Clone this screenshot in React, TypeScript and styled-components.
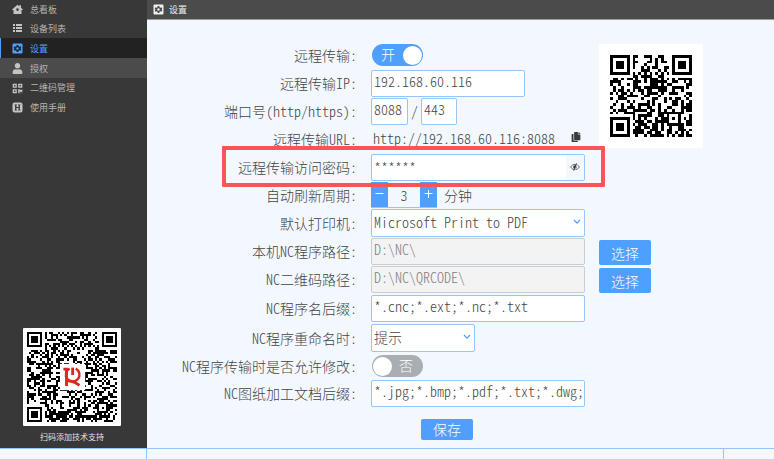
import React, { useMemo, useState } from "react";
import styled, { createGlobalStyle, css } from "styled-components";
import { FaCopy, FaQrcode, FaUser } from "react-icons/fa";

/* ---------- QR encoding (byte mode, equal-length blocks) ---------- */

type QrSpec = {
  version: number;
  blocks: number;
  dataPerBlock: number;
  ecPerBlock: number;
  levelBits: number;
  align: number;
};

const V3Q: QrSpec = { version: 3, blocks: 2, dataPerBlock: 17, ecPerBlock: 18, levelBits: 3, align: 22 };
const V6H: QrSpec = { version: 6, blocks: 4, dataPerBlock: 15, ecPerBlock: 28, levelBits: 2, align: 34 };

function gfMul(a: number, b: number): number {
  let z = 0;
  for (let i = 7; i >= 0; i--) {
    z = (z << 1) ^ ((z >>> 7) * 0x11d);
    z ^= ((b >>> i) & 1) * a;
  }
  return z & 0xff;
}

function errorCodewords(data: number[], degree: number): number[] {
  const gen: number[] = new Array(degree).fill(0);
  gen[degree - 1] = 1;
  let root = 1;
  for (let i = 0; i < degree; i++) {
    for (let j = 0; j < degree; j++) {
      gen[j] = gfMul(gen[j], root);
      if (j + 1 < degree) gen[j] ^= gen[j + 1];
    }
    root = gfMul(root, 2);
  }
  const rem: number[] = new Array(degree).fill(0);
  data.forEach((byte) => {
    const factor = byte ^ (rem.shift() as number);
    rem.push(0);
    gen.forEach((c, i) => {
      rem[i] ^= gfMul(c, factor);
    });
  });
  return rem;
}

function codewords(text: string, spec: QrSpec): number[] {
  const capacity = spec.blocks * spec.dataPerBlock;
  const bits: number[] = [];
  const put = (value: number, length: number) => {
    for (let i = length - 1; i >= 0; i--) bits.push((value >>> i) & 1);
  };
  put(4, 4);
  put(text.length, 8);
  for (const ch of text) put(ch.charCodeAt(0), 8);
  put(0, Math.min(4, capacity * 8 - bits.length));
  while (bits.length % 8) bits.push(0);
  const data: number[] = [];
  for (let i = 0; i < bits.length; i += 8) {
    data.push(bits.slice(i, i + 8).reduce((a, b) => (a << 1) | b, 0));
  }
  for (let pad = 0xec; data.length < capacity; pad ^= 0xec ^ 0x11) data.push(pad);

  const parts = Array.from({ length: spec.blocks }, (_, i) =>
    data.slice(i * spec.dataPerBlock, (i + 1) * spec.dataPerBlock)
  );
  const ecs = parts.map((p) => errorCodewords(p, spec.ecPerBlock));
  const out: number[] = [];
  for (let i = 0; i < spec.dataPerBlock; i++) parts.forEach((p) => out.push(p[i]));
  for (let i = 0; i < spec.ecPerBlock; i++) ecs.forEach((e) => out.push(e[i]));
  return out;
}

const MASKS: Array<(x: number, y: number) => boolean> = [
  (x, y) => (x + y) % 2 === 0,
  (_x, y) => y % 2 === 0,
  (x) => x % 3 === 0,
  (x, y) => (x + y) % 3 === 0,
  (x, y) => (Math.floor(x / 3) + Math.floor(y / 2)) % 2 === 0,
  (x, y) => ((x * y) % 2) + ((x * y) % 3) === 0,
  (x, y) => (((x * y) % 2) + ((x * y) % 3)) % 2 === 0,
  (x, y) => (((x + y) % 2) + ((x * y) % 3)) % 2 === 0,
];

function penalty(m: boolean[][]): number {
  const n = m.length;
  let score = 0;
  let dark = 0;
  for (const flip of [false, true]) {
    for (let a = 0; a < n; a++) {
      let line = "";
      for (let b = 0; b < n; b++) line += (flip ? m[b][a] : m[a][b]) ? "1" : "0";
      (line.match(/0{5,}|1{5,}/g) || []).forEach((run) => {
        score += run.length - 2;
      });
      for (let i = 0; i + 11 <= n; i++) {
        const s = line.slice(i, i + 11);
        if (s === "10111010000" || s === "00001011101") score += 40;
      }
    }
  }
  for (let y = 0; y < n; y++) {
    for (let x = 0; x < n; x++) {
      if (m[y][x]) dark++;
      if (y + 1 < n && x + 1 < n && m[y][x] === m[y][x + 1] && m[y][x] === m[y + 1][x] && m[y][x] === m[y + 1][x + 1]) {
        score += 3;
      }
    }
  }
  return score + Math.floor(Math.abs((dark * 20) / (n * n) - 10)) * 10;
}

function encodeQr(text: string, spec: QrSpec): boolean[][] {
  const n = spec.version * 4 + 17;
  const stream = codewords(text, spec);

  const build = (mask: number): boolean[][] => {
    const m: boolean[][] = Array.from({ length: n }, () => new Array(n).fill(false));
    const fixed: boolean[][] = Array.from({ length: n }, () => new Array(n).fill(false));
    const set = (x: number, y: number, v: boolean) => {
      if (x < 0 || y < 0 || x >= n || y >= n) return;
      m[y][x] = v;
      fixed[y][x] = true;
    };
    for (let i = 0; i < n; i++) {
      set(6, i, i % 2 === 0);
      set(i, 6, i % 2 === 0);
    }
    [[3, 3], [n - 4, 3], [3, n - 4]].forEach(([cx, cy]) => {
      for (let dy = -4; dy <= 4; dy++) {
        for (let dx = -4; dx <= 4; dx++) {
          const d = Math.max(Math.abs(dx), Math.abs(dy));
          set(cx + dx, cy + dy, d !== 2 && d !== 4);
        }
      }
    });
    for (let dy = -2; dy <= 2; dy++) {
      for (let dx = -2; dx <= 2; dx++) {
        set(spec.align + dx, spec.align + dy, Math.max(Math.abs(dx), Math.abs(dy)) !== 1);
      }
    }
    const info = (spec.levelBits << 3) | mask;
    let rem = info;
    for (let i = 0; i < 10; i++) rem = (rem << 1) ^ ((rem >>> 9) * 0x537);
    const format = ((info << 10) | rem) ^ 0x5412;
    const bit = (i: number) => ((format >>> i) & 1) === 1;
    for (let i = 0; i <= 5; i++) set(8, i, bit(i));
    set(8, 7, bit(6));
    set(8, 8, bit(7));
    set(7, 8, bit(8));
    for (let i = 9; i < 15; i++) set(14 - i, 8, bit(i));
    for (let i = 0; i < 8; i++) set(n - 1 - i, 8, bit(i));
    for (let i = 8; i < 15; i++) set(8, n - 15 + i, bit(i));
    set(8, n - 8, true);

    let k = 0;
    for (let right = n - 1; right >= 1; right -= 2) {
      if (right === 6) right = 5;
      for (let v = 0; v < n; v++) {
        for (let j = 0; j < 2; j++) {
          const x = right - j;
          const y = ((right + 1) & 2) === 0 ? n - 1 - v : v;
          if (fixed[y][x]) continue;
          const raw = k < stream.length * 8 && ((stream[k >>> 3] >>> (7 - (k & 7))) & 1) === 1;
          m[y][x] = raw !== MASKS[mask](x, y);
          k++;
        }
      }
    }
    return m;
  };

  return MASKS.map((_, i) => build(i)).reduce((best, cur) => (penalty(cur) < penalty(best) ? cur : best));
}

function modulesPath(m: boolean[][]): string {
  let d = "";
  m.forEach((row, y) => {
    let x = 0;
    while (x < row.length) {
      if (!row[x]) {
        x++;
        continue;
      }
      let end = x;
      while (row[end]) end++;
      d += `M${x} ${y}h${end - x}v1h${x - end}z`;
      x = end;
    }
  });
  return d;
}

/* ---------- styles ---------- */

const color = {
  blue: "#4f9fff",
  line: "#95c5fb",
  page: "#f3f8ff",
  text: "#444444",
  side: "#383838",
  bar: "#4b4b4b",
  red: "#fb5356",
};

const GlobalStyle = createGlobalStyle`
  *, *::before, *::after { box-sizing: border-box; }
  body {
    margin: 0;
    background: ${color.page};
    color: ${color.text};
    font-family: "Noto Sans CJK SC", sans-serif;
    font-size: 14px;
    font-weight: 300;
    font-feature-settings: "hwid";
  }
  button, input, select, output { font: inherit; font-feature-settings: inherit; color: inherit; }
  button { padding: 0; border: 0; cursor: pointer; }
`;

const Page = styled.div`
  display: flex;
  flex-direction: column;
  min-height: 100vh;
`;

const Body = styled.div`
  flex: 1;
  display: grid;
  grid-template-columns: 147px 1fr;
`;

const Sidebar = styled.aside`
  display: flex;
  flex-direction: column;
  justify-content: space-between;
  background: ${color.side};
`;

const Nav = styled.nav`
  display: grid;
  grid-template-rows: 18px 20px 20px 20px 19px 20px;
`;

const NavItem = styled.a<{ $state?: "active" | "hover" }>`
  display: flex;
  align-items: center;
  gap: 7px;
  padding: 1px 0 0 12px;
  font-size: 9px;
  font-weight: 400;
  line-height: 12px;
  text-decoration: none;
  color: #b4b4b4;
  svg { flex: none; width: 11px; height: 11px; color: #c4c4c4; }
  ${(p) => p.$state === "hover" && css`background: ${color.bar};`}
  ${(p) =>
    p.$state === "active" &&
    css`
      background: #222222;
      color: ${color.blue};
      box-shadow: inset 1px 0 ${color.blue};
      svg { color: ${color.blue}; }
    `}
`;

const Support = styled.div`
  display: flex;
  flex-direction: column;
  align-items: center;
  gap: 5px;
  padding: 0 3px 5px 0;
  color: #e2e2e2;
  font-size: 8px;
  font-weight: 400;
  line-height: 12px;
`;

const QrCard = styled.div<{ $pad: number }>`
  padding: ${(p) => p.$pad}px;
  background: #ffffff;
  border-radius: 1px;
  svg { display: block; }
`;

const Main = styled.main`
  display: flex;
  flex-direction: column;
  min-width: 0;
`;

const TitleBar = styled.header`
  display: flex;
  align-items: center;
  gap: 5px;
  height: 20px;
  padding-left: 6px;
  background: ${color.bar};
  border-bottom: 1px solid #9a9a9a;
  color: #f0f0f0;
`;

const Title = styled.h1`
  margin: 0;
  font-size: 9px;
  font-weight: 400;
  line-height: 12px;
`;

const Form = styled.form`
  display: grid;
  grid-template-columns: 1fr 214px 175px;
  grid-template-rows: repeat(9, 28px) 30px 30px 26px 28px;
  column-gap: 14px;
  align-items: center;
  padding: 21px 0 8px;
`;

const Label = styled.label`
  grid-column: 1;
  text-align: right;
  line-height: 20px;
  white-space: nowrap;
`;

const Control = styled.div`
  grid-column: 2;
  position: relative;
  display: flex;
  align-items: center;
`;

const fieldBox = css`
  height: 27px;
  border: 1px solid ${color.line};
  border-radius: 2px;
  background: #ffffff;
`;

const TextField = styled.input<{ $width?: number }>`
  ${fieldBox}
  width: ${(p) => (p.$width ? `${p.$width}px` : "100%")};
  padding: 0 1px 4px 2px;
  outline: none;
  &:disabled {
    background: #f3f3f3;
    border-color: #c9ccd0;
    color: #808080;
  }
`;

const Slash = styled.span`
  width: 13px;
  text-align: center;
`;

const Address = styled.output`
  flex: 1;
  padding: 0 0 2px 2px;
`;

const IconButton = styled.button`
  display: flex;
  align-items: center;
  justify-content: center;
  width: 18px;
  height: 25px;
  background: ${color.page};
  color: #3b3b3b;
`;

const CopyButton = styled(IconButton)`
  padding-bottom: 4px;
`;

const SecretBox = styled.div`
  ${fieldBox}
  display: flex;
  width: 100%;
  overflow: hidden;
`;

const SecretInput = styled.input`
  flex: 1;
  min-width: 0;
  padding: 0 0 0 2px;
  border: 0;
  outline: none;
  background: none;
`;

const Highlight = styled.div`
  position: absolute;
  inset: -8px -20px -6px -149px;
  z-index: 1;
  border: 4px solid ${color.red};
  border-radius: 1px;
  pointer-events: none;
`;

const Stepper = styled.div`
  display: flex;
  height: 26px;
  margin-right: 7px;
  border-bottom: 1px solid ${color.line};
`;

const StepButton = styled.button`
  display: flex;
  justify-content: center;
  align-items: center;
  width: 17px;
  background: ${color.blue};
  color: #ffffff;
`;

const StepValue = styled.input`
  width: 32px;
  padding: 0;
  border: 0;
  outline: none;
  background: none;
  text-align: center;
`;

const SelectBox = styled.div<{ $width?: number }>`
  position: relative;
  width: ${(p) => (p.$width ? `${p.$width}px` : "100%")};
  svg {
    position: absolute;
    right: 4px;
    top: 9px;
    color: ${color.blue};
    pointer-events: none;
  }
`;

const Select = styled.select`
  ${fieldBox}
  display: block;
  width: 100%;
  height: 28px;
  padding: 0 14px 3px 2px;
  appearance: none;
  outline: none;
`;

const Switch = styled.label<{ $on: boolean }>`
  display: flex;
  flex-direction: ${(p) => (p.$on ? "row" : "row-reverse")};
  align-items: center;
  justify-content: space-between;
  width: 51px;
  height: 22px;
  margin-left: 1px;
  padding: ${(p) => (p.$on ? "0 1px 0 9px" : "0 10px 0 1px")};
  border-radius: 11px;
  background: ${(p) => (p.$on ? color.blue : "#a9aeb2")};
  color: #ffffff;
  line-height: 20px;
  cursor: pointer;
`;

const SwitchText = styled.span`
  padding-bottom: 2px;
`;

const SwitchInput = styled.input`
  position: absolute;
  opacity: 0;
  pointer-events: none;
`;

const Knob = styled.span`
  width: 19px;
  height: 19px;
  border-radius: 50%;
  background: #ffffff;
`;

const Button = styled.button`
  width: 52px;
  height: 25px;
  border-radius: 2px;
  background: ${color.blue};
  color: #ffffff;
  line-height: 20px;
`;

const BrowseButton = styled(Button)`
  grid-column: 3;
  align-self: end;
`;

const SaveButton = styled(Button)`
  grid-column: 2;
  height: 21px;
  margin: 12px 0 0 50px;
  padding-bottom: 2px;
`;

const AddressQr = styled(QrCard)`
  grid-column: 3;
  grid-row: 1 / span 4;
  place-self: start;
  margin-top: 3px;
`;

const StatusBar = styled.footer`
  display: grid;
  grid-template-columns: 147px 1fr 50px;
  height: 11px;
  border-top: 1px solid ${color.line};
`;

const StatusCell = styled.div`
  border-right: 1px solid ${color.line};
  &:last-child { border-right: 0; }
`;

/* ---------- icons ---------- */

const HomeIcon = () => (
  <svg viewBox="0 0 22 22" fill="currentColor" width="11" height="11">
    <path
      fillRule="evenodd"
      d="M11 1.5 14.5 4.4V2.5H18V7.3L22 10.8 20.6 12.4 19 11.3V20H3V11.3L1.4 12.4 0 10.8ZM11 8.6a2.6 2.6 0 1 0 0 5.2 2.6 2.6 0 0 0 0-5.2Z"
    />
  </svg>
);

const ListIcon = () => (
  <svg viewBox="0 0 11 11" fill="currentColor" width="11" height="11">
    <path d="M1 1H3V3H1ZM4 1H10V3H4ZM1 4H3V6H1ZM4 4H10V6H4ZM1 7H3V9H1ZM4 7H10V9H4Z" />
  </svg>
);

const GearSquareIcon = () => (
  <svg viewBox="0 0 22 22" width="11" height="11" fill="currentColor">
    <path
      fillRule="evenodd"
      d="M3 1H19Q21 1 21 3V19Q21 21 19 21H3Q1 21 1 19V3Q1 1 3 1ZM9.4 4 8.9 6.3 7.2 7.3 5 6.6 3.4 9.4 5.1 11 3.4 12.6 5 15.4 7.2 14.7 8.9 15.7 9.4 18H12.6L13.1 15.7 14.8 14.7 17 15.4 18.6 12.6 16.9 11 18.6 9.4 17 6.6 14.8 7.3 13.1 6.3 12.6 4Z"
    />
    <circle cx="11" cy="11" r="2.4" />
  </svg>
);

const ManualIcon = () => (
  <svg viewBox="0 0 22 22" width="11" height="11" fill="currentColor">
    <path
      fillRule="evenodd"
      d="M5 1H17Q21 1 21 5V17Q21 21 17 21H5Q1 21 1 17V5Q1 1 5 1ZM5 5V6.6H6.2V15.4H5V17H10V15.4H8.8V11.8H13.2V15.4H12V17H17V15.4H15.8V6.6H17V5H12V6.6H13.2V10.2H8.8V6.6H10V5Z"
    />
  </svg>
);

const HiddenEyeIcon = () => (
  <svg viewBox="0 0 20 16" width="10" height="8" fill="none" stroke="currentColor">
    <path d="M1 8Q5.5 2.5 10 2.5T19 8Q14.5 13.5 10 13.5T1 8Z" strokeWidth="1.5" />
    <circle cx="10" cy="8" r="3.2" fill="currentColor" />
    <path d="M13.5 0.5 7.5 15.5" strokeWidth="1.8" />
    <path d="M15.3 1 9.3 16" stroke={color.page} strokeWidth="1.2" />
  </svg>
);

const ChevronIcon = () => (
  <svg viewBox="0 0 8 8" width="8" height="8" fill="none" stroke="currentColor" strokeWidth="1.2">
    <path d="M1 2 4 5.2 7 2" />
  </svg>
);

const MinusIcon = () => (
  <svg viewBox="0 0 9 9" width="9" height="9" stroke="currentColor">
    <path d="M0.5 3.5H8.5" />
  </svg>
);

const PlusIcon = () => (
  <svg viewBox="0 0 9 9" width="9" height="9" stroke="currentColor">
    <path d="M0.5 3.5H8.5M4.5 0V8" />
  </svg>
);

const BrandMark = () => (
  <g fill="none" stroke="#d9291c">
    <rect x="15" y="14.5" width="11.5" height="12" fill="#ffffff" stroke="none" />
    <path d="M16.6 16.9H18V24.6" strokeWidth="1.3" />
    <path d="M19.4 16.7A3.1 3.1 0 1 0 22.2 16.7" strokeWidth="1.1" />
    <path d="M20.8 16.2V19.6" strokeWidth="1.3" />
    <path d="M18.4 22.3Q20.8 22.2 23.9 24.3" strokeWidth="1.3" />
  </g>
);

/* ---------- parts ---------- */

function QrCode({ text, spec, size, title, children }: {
  text: string;
  spec: QrSpec;
  size: number;
  title: string;
  children?: React.ReactNode;
}) {
  const matrix = useMemo(() => encodeQr(text, spec), [text, spec]);
  const n = matrix.length;
  return (
    <svg viewBox={`0 0 ${n} ${n}`} width={size} height={size} role="img" aria-label={title}>
      <path d={modulesPath(matrix)} fill="#000000" shapeRendering="crispEdges" />
      {children}
    </svg>
  );
}

function Toggle({ id, initial, onText, offText }: { id: string; initial: boolean; onText: string; offText: string }) {
  const [on, setOn] = useState(initial);
  return (
    <Switch $on={on}>
      <SwitchInput id={id} type="checkbox" role="switch" checked={on} onChange={() => setOn(!on)} />
      <SwitchText>{on ? onText : offText}</SwitchText>
      <Knob />
    </Switch>
  );
}

const navItems: Array<{ text: string; icon: React.ReactNode; state?: "active" | "hover" }> = [
  { text: "总看板", icon: <HomeIcon /> },
  { text: "设备列表", icon: <ListIcon /> },
  { text: "设置", icon: <GearSquareIcon />, state: "active" },
  { text: "授权", icon: <FaUser />, state: "hover" },
  { text: "二维码管理", icon: <FaQrcode /> },
  { text: "使用手册", icon: <ManualIcon /> },
];

export default function App() {
  const [minutes, setMinutes] = useState(3);
  const address = "http://192.168.60.116:8088";

  return (
    <Page>
      <GlobalStyle />
      <Body>
        <Sidebar>
          <Nav>
            {navItems.map((item) => (
              <NavItem key={item.text} href="#" $state={item.state}>
                {item.icon}
                {item.text}
              </NavItem>
            ))}
          </Nav>
          <Support>
            <QrCard $pad={4}>
              <QrCode text="https://work.weixin.qq.com/kfid/kfc75b1d8a1f3ae3963" spec={V6H} size={90} title="技术支持二维码">
                <BrandMark />
              </QrCode>
            </QrCard>
            扫码添加技术支持
          </Support>
        </Sidebar>

        <Main>
          <TitleBar>
            <GearSquareIcon />
            <Title>设置</Title>
          </TitleBar>

          <Form onSubmit={(e) => e.preventDefault()}>
            <AddressQr $pad={11}>
              <QrCode text={address} spec={V3Q} size={82} title="远程传输二维码" />
            </AddressQr>

            <Label htmlFor="remote">远程传输:</Label>
            <Control>
              <Toggle id="remote" initial onText="开" offText="关" />
            </Control>

            <Label htmlFor="ip">远程传输IP:</Label>
            <Control>
              <TextField id="ip" $width={154} defaultValue="192.168.60.116" />
            </Control>

            <Label htmlFor="http">端口号(http/https):</Label>
            <Control>
              <TextField id="http" $width={37} defaultValue="8088" />
              <Slash>/</Slash>
              <TextField aria-label="https" $width={36} defaultValue="443" />
            </Control>

            <Label htmlFor="url">远程传输URL:</Label>
            <Control>
              <Address id="url">{address}</Address>
              <CopyButton type="button" aria-label="复制">
                <FaCopy size={10} />
              </CopyButton>
            </Control>

            <Label htmlFor="password">远程传输访问密码:</Label>
            <Control>
              <SecretBox>
                <SecretInput id="password" defaultValue="******" />
                <IconButton type="button" aria-label="显示密码">
                  <HiddenEyeIcon />
                </IconButton>
              </SecretBox>
              <Highlight />
            </Control>

            <Label htmlFor="period">自动刷新周期:</Label>
            <Control>
              <Stepper>
                <StepButton type="button" aria-label="减少" onClick={() => setMinutes(Math.max(1, minutes - 1))}>
                  <MinusIcon />
                </StepButton>
                <StepValue id="period" value={minutes} onChange={(e) => setMinutes(Number(e.target.value) || 1)} />
                <StepButton type="button" aria-label="增加" onClick={() => setMinutes(minutes + 1)}>
                  <PlusIcon />
                </StepButton>
              </Stepper>
              分钟
            </Control>

            <Label htmlFor="printer">默认打印机:</Label>
            <Control>
              <SelectBox>
                <Select id="printer">
                  <option>Microsoft Print to PDF</option>
                </Select>
                <ChevronIcon />
              </SelectBox>
            </Control>

            <Label htmlFor="ncPath">本机NC程序路径:</Label>
            <Control>
              <TextField id="ncPath" disabled defaultValue={"D:\\NC\\"} />
            </Control>
            <BrowseButton type="button">选择</BrowseButton>

            <Label htmlFor="qrPath">NC二维码路径:</Label>
            <Control>
              <TextField id="qrPath" disabled defaultValue={"D:\\NC\\QRCODE\\"} />
            </Control>
            <BrowseButton type="button">选择</BrowseButton>

            <Label htmlFor="ncExt">NC程序名后缀:</Label>
            <Control>
              <TextField id="ncExt" defaultValue="*.cnc;*.ext;*.nc;*.txt" />
            </Control>

            <Label htmlFor="rename">NC程序重命名时:</Label>
            <Control>
              <SelectBox $width={104}>
                <Select id="rename">
                  <option>提示</option>
                </Select>
                <ChevronIcon />
              </SelectBox>
            </Control>

            <Label htmlFor="editable">NC程序传输时是否允许修改:</Label>
            <Control>
              <Toggle id="editable" initial={false} onText="是" offText="否" />
            </Control>

            <Label htmlFor="docExt">NC图纸加工文档后缀:</Label>
            <Control>
              <TextField id="docExt" defaultValue="*.jpg;*.bmp;*.pdf;*.txt;*.dwg;*.dxf" />
            </Control>

            <SaveButton type="submit">保存</SaveButton>
          </Form>
        </Main>
      </Body>
      <StatusBar>
        <StatusCell />
        <StatusCell />
        <StatusCell />
      </StatusBar>
    </Page>
  );
}
